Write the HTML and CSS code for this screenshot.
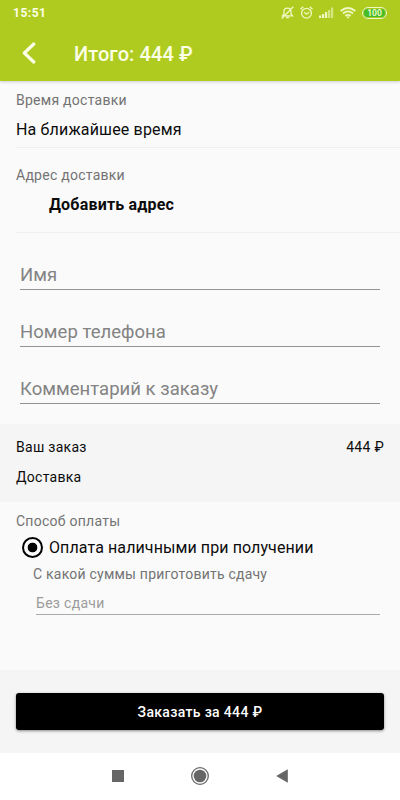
FILE: index.html
```
<!DOCTYPE html>
<html lang="ru">
<head>
<meta charset="utf-8">
<title>Оформление заказа</title>
<link rel="stylesheet" href="styles.css">
</head>
<body>
<div class="screen">
  <header class="header">
    <div class="status">
      <span class="clock">15:51</span>
      <div class="status-icons">
        <svg width="13" height="14" viewBox="0 0 13 14" fill="none" stroke="currentColor" stroke-width="1.3"><path d="M1.500 9.800h10L10 8V5.200Q10 2.200 6.500 2.200T3 5.200V8ZM5 11.500h3M12.300.8L.8 12.500"/></svg>
        <svg width="13" height="14" viewBox="0 0 13 14" fill="none" stroke="currentColor" stroke-width="1.3"><circle cx="6.500" cy="7.200" r="4.900"/><path d="M.5 3.300L3.300.8M9.700.8l2.800 2.500M4.200 6.200l2.300 2L9 6.200"/></svg>
        <svg width="15" height="12" viewBox="0 0 15 12" fill="currentColor"><path d="M0 8.500h2.200V11H0zM3 7h2.200v4H3zM6 5h2.200v6H6z"/><path opacity=".6" d="M9 3h2.200v8H9zM12 .5h2.200V11H12z"/></svg>
        <svg width="16" height="12" viewBox="0 0 16 12" fill="none" stroke="currentColor" stroke-width="1.800"><path d="M.7 4Q8-2 15.300 4M3 6.500Q8 2.300 13 6.500M5.300 8.800Q8 6.800 10.700 8.800"/><path d="M6.300 9.500h3.400L8 11.800z" fill="currentColor" stroke="none"/></svg>
        <span class="battery">100</span>
      </div>
    </div>
    <div class="appbar">
      <svg class="back" width="14" height="22" viewBox="0 0 14 22" fill="none" stroke="currentColor" stroke-width="3.200" stroke-linecap="round" stroke-linejoin="round"><path d="M11.800 2L2.300 11l9.500 9"/></svg>
      <h1 class="title">Итого: 444 ₽</h1>
    </div>
  </header>

  <main class="content">
    <section class="section time">
      <p class="label">Время доставки</p>
      <p class="value value-time">На ближайшее время</p>
    </section>
    <section class="section address">
      <p class="label">Адрес доставки</p>
      <p class="value add">Добавить адрес</p>
    </section>
    <section class="fields">
      <div class="field"><span>Имя</span></div>
      <div class="field"><span>Номер телефона</span></div>
      <div class="field"><span>Комментарий к заказу</span></div>
    </section>
    <section class="summary">
      <div class="row"><span>Ваш заказ</span><span>444 ₽</span></div>
      <div class="row"><span>Доставка</span></div>
    </section>
    <section class="payment">
      <p class="label">Способ оплаты</p>
      <div class="option"><span class="radio"></span><span>Оплата наличными при получении</span></div>
      <p class="label hint">С какой суммы приготовить сдачу</p>
      <div class="change"><span>Без сдачи</span></div>
    </section>
  </main>

  <footer class="footer">
    <div class="button">Заказать за 444 ₽</div>
  </footer>
  <nav class="nav">
    <svg width="12" height="12" viewBox="0 0 12 12"><path fill="currentColor" d="M0 0h12v12H0z"/></svg>
    <svg width="18" height="18" viewBox="0 0 18 18"><circle cx="9" cy="9" r="8.300" fill="none" stroke="currentColor" stroke-width="1.300"/><circle cx="9" cy="9" r="6.300" fill="currentColor"/></svg>
    <svg width="12" height="14" viewBox="0 0 12 14"><path fill="currentColor" d="M11.800.3v13.400L.2 7z"/></svg>
  </nav>
</div>
</body>
</html>
```
FILE: styles.css
```
* { box-sizing: border-box; }
body { margin: 0; font-family: Roboto, "Noto Sans", sans-serif; color: #0c0c0c; }
p, h1 { margin: 0; }
svg { display: block; flex: none; }
span, p, h1 { white-space: nowrap; }

.screen { width: 400px; height: 800px; display: flex; flex-direction: column; background: #fafafa; overflow: hidden; }

.header { height: 81px; flex: none; background: #b0cb1f; color: #fbffe6; box-shadow: 0 1px 3px rgba(0, 0, 0, .18); }
.status { height: 25px; padding: 0 13px; display: flex; align-items: center; justify-content: space-between; }
.clock { padding-top: 1px; font-size: 12px; font-weight: 700; line-height: 25px; letter-spacing: .5px; }
.status-icons { display: flex; align-items: center; gap: 6px; color: #f0f8c4; }
.battery { width: 25px; height: 12px; border: 1px solid #f0f8c4; border-radius: 6px; background: #43bd2c; box-shadow: inset 0 0 0 1px #b0cb1f; font-size: 8.5px; font-weight: 700; line-height: 10px; text-align: center; }
.appbar { height: 56px; padding-left: 22px; display: flex; align-items: center; gap: 38px; }
.title { padding-top: 2px; font-size: 20px; font-weight: 500; line-height: 28px; letter-spacing: .1px; }

.content { flex: 1; }
.section { margin-left: 16px; border-bottom: 1px solid #efefef; }
.label { font-size: 14px; line-height: 20px; color: #737373; letter-spacing: .26px; }
.value { font-size: 16px; line-height: 22px; }
.time { height: 67px; padding-top: 9px; }
.value-time { margin-top: 9px; letter-spacing: .16px; }
.address { height: 85px; padding-top: 17px; }
.add { margin: 9px 0 0 33px; font-weight: 700; letter-spacing: .2px; }

.fields { height: 191px; padding: 0 20px; }
.field { height: 57px; padding-bottom: 2px; display: flex; align-items: flex-end; border-bottom: 1px solid #929292; font-size: 18.500px; line-height: 24px; letter-spacing: .03px; color: #838383; }

.summary { height: 78px; padding: 8px 16px; background: #f5f5f5; }
.row { height: 30px; display: flex; align-items: center; justify-content: space-between; font-size: 14px; letter-spacing: .28px; }

.payment { padding: 9px 20px 0 16px; }
.option { height: 32px; display: flex; align-items: center; gap: 6px; padding-left: 6px; font-size: 16px; letter-spacing: .1px; }
.radio { width: 21px; height: 21px; flex: none; border: 2px solid #000; border-radius: 50%; background: radial-gradient(circle, #000 0 4.5px, transparent 5.2px); }
.hint { margin: 1px 0 0 17px; letter-spacing: .22px; }
.change { height: 31px; margin-left: 20px; padding-bottom: 1px; display: flex; align-items: flex-end; border-bottom: 1px solid #aaa; font-size: 14px; line-height: 20px; letter-spacing: .3px; color: #9c9c9c; }

.footer { height: 83px; flex: none; padding: 23px 16px; background: #f5f5f5; }
.button { height: 37px; display: flex; align-items: center; justify-content: center; border-radius: 3px; background: #000; color: #fff; font-size: 14px; font-weight: 500; letter-spacing: .33px; box-shadow: 0 1px 3px rgba(0, 0, 0, .45); }

.nav { height: 47px; flex: none; background: #fff; color: #666; display: flex; align-items: center; justify-content: center; gap: 67px; padding: 0 1px 1px 0; }
```
